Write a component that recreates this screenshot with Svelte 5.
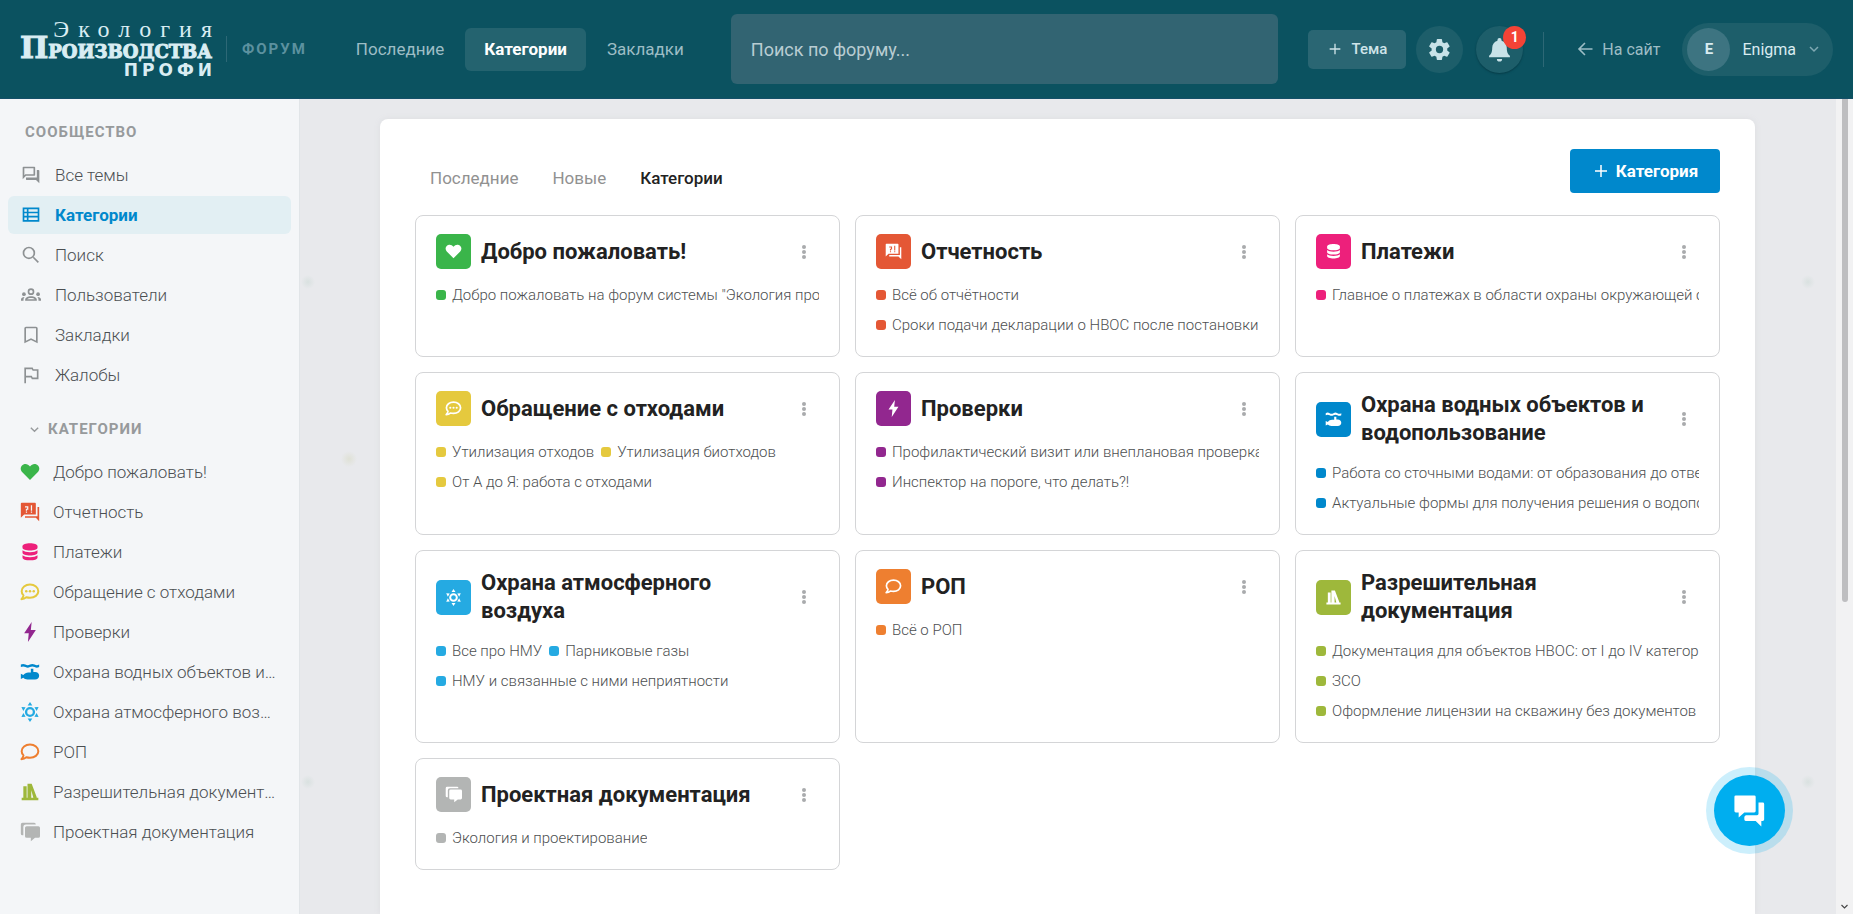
<script lang="ts">
    interface Category {
        name: string;
        icon: string;
        color: string;
        topics: string[];
    }

    const community = [
        { name: "Все темы", icon: "forum" },
        { name: "Категории", icon: "table", active: true },
        { name: "Поиск", icon: "search" },
        { name: "Пользователи", icon: "groups" },
        { name: "Закладки", icon: "bookmark" },
        { name: "Жалобы", icon: "flag" },
    ];

    const categories: Category[] = [
        {
            name: "Добро пожаловать!",
            icon: "heart",
            color: "#3ab54a",
            topics: ['Добро пожаловать на форум системы "Экология производства. Профи"'],
        },
        {
            name: "Отчетность",
            icon: "question",
            color: "#e45735",
            topics: ["Всё об отчётности", "Сроки подачи декларации о НВОС после постановки"],
        },
        {
            name: "Платежи",
            icon: "coins",
            color: "#ed207b",
            topics: ["Главное о платежах в области охраны окружающей среды"],
        },
        {
            name: "Обращение с отходами",
            icon: "commentDots",
            color: "#e5c93e",
            topics: ["Утилизация отходов", "Утилизация биотходов", "От А до Я: работа с отходами"],
        },
        {
            name: "Проверки",
            icon: "bolt",
            color: "#92278f",
            topics: ["Профилактический визит или внеплановая проверка?", "Инспектор на пороге, что делать?!"],
        },
        {
            name: "Охрана водных объектов и водопользование",
            icon: "water",
            color: "#0088cc",
            topics: [
                "Работа со сточными водами: от образования до отведения",
                "Актуальные формы для получения решения о водопользовании",
            ],
        },
        {
            name: "Охрана атмосферного воздуха",
            icon: "sun",
            color: "#25aae2",
            topics: ["Все про НМУ", "Парниковые газы", "НМУ и связанные с ними неприятности"],
        },
        {
            name: "РОП",
            icon: "comment",
            color: "#ee7f30",
            topics: ["Всё о РОП"],
        },
        {
            name: "Разрешительная документация",
            icon: "books",
            color: "#9eb83b",
            topics: [
                "Документация для объектов НВОС: от I до IV категории",
                "ЗСО",
                "Оформление лицензии на скважину без документов",
            ],
        },
        {
            name: "Проектная документация",
            icon: "messages",
            color: "#b3b5b4",
            topics: ["Экология и проектирование"],
        },
    ];

    let query = $state("");
    let open = $state(true);
</script>

{#snippet glyph(name: string)}
    <svg class="glyph" viewBox="0 0 24 24" fill="currentColor" aria-hidden="true">
        {#if name === "forum"}
            <path d="M15 4v7H5.2L4 12.2V4h11m1-2H3a1 1 0 0 0-1 1v14l4-4h10a1 1 0 0 0 1-1V3a1 1 0 0 0-1-1m5 4h-2v9H6v2a1 1 0 0 0 1 1h11l4 4V7a1 1 0 0 0-1-1Z" />
        {:else if name === "table"}
            <path fill-rule="evenodd" d="M2 3h20v17H2ZM4 5v3h3V5ZM9 5v3h11V5ZM4 10v3h3v-3ZM9 10v3h11v-3ZM4 15v3h3v-3ZM9 15v3h11v-3Z" />
        {:else if name === "search"}
            <circle cx="9.5" cy="9.5" r="6.5" fill="none" stroke="currentColor" stroke-width="2" />
            <path d="m14 15.4 1.4-1.4 6.1 6.1-1.4 1.4z" />
        {:else if name === "groups"}
            <path fill-rule="evenodd" d="M12 4a4 4 0 1 0 0 8 4 4 0 0 0 0-8Zm0 2a2 2 0 1 1 0 4 2 2 0 0 1 0-4ZM12 13.500c3.800 0 7 1.700 7 4.300V19H5v-1.200c0-2.600 3.200-4.300 7-4.300Zm0 2c-2 0-3.800.600-4.600 1.500h9.200c-.800-.900-2.600-1.500-4.600-1.500Z" />
            <circle cx="3.500" cy="11" r="2.200" />
            <circle cx="20.500" cy="11" r="2.200" />
            <path d="M0 19v-1.500c0-1.600 1.700-2.900 4.300-3-.9 1-1.300 2-1.300 3.200V19ZM24 19v-1.500c0-1.600-1.700-2.900-4.300-3 .9 1 1.300 2 1.300 3.200V19Z" />
        {:else if name === "bookmark"}
            <path d="M18 2H6a2 2 0 0 0-2 2v18l8-4 8 4V4a2 2 0 0 0-2-2m0 17-6-3-6 3V4h12Z" />
        {:else if name === "flag"}
            <path d="M4 3v19h2v-7h6l1 2h8V5h-6l-1-2Zm2 2h7l1 2h5v8h-5l-1-2H6Z" />
        {:else if name === "heart"}
            <path d="M12 21.500 2.500 12C-.5 8.700.8 3.800 4.700 2.700 7.500 1.900 10.200 3 12 5.300c1.800-2.300 4.500-3.400 7.300-2.600 3.900 1.100 5.200 6 2.200 9.300Z" />
        {:else if name === "question"}
            <path fill-rule="evenodd" d="M2 1h16a1 1 0 0 1 1 1v13H5l-4 4V2a1 1 0 0 1 1-1ZM6 5v1.500h2.500V8H7v2.500h1.500V9.300H10V5Zm1 6.500V13h1.500v-1.500ZM13 4v6.500h1.500V4Zm0 7.500V13h1.500v-1.500Z" />
            <path d="M21 6h2v17l-4-4H6v-2h15Z" />
        {:else if name === "coins"}
            <path d="M3 5c0-2.200 4-3.500 9-3.500S21 2.800 21 5v2c0 2-4 3.300-9 3.300S3 9 3 7Z" />
            <path d="M3 10c1.800 1.600 5 2.400 9 2.400s7.200-.8 9-2.400v3c0 2-4 3.300-9 3.300S3 15 3 13Z" />
            <path d="M3 16c1.800 1.600 5 2.400 9 2.400s7.200-.8 9-2.400v2.500c0 2.200-4 3.500-9 3.500s-9-1.300-9-3.500Z" />
        {:else if name === "comment" || name === "commentDots"}
            <path fill="none" stroke="currentColor" stroke-width="2.400" stroke-linejoin="round" d="M12 3C6.400 3 2 6.500 2 11c0 2 .8 3.600 2.200 5-.3 1.800-1.200 3.300-2.500 4.600 2.300 0 4.300-.8 5.900-2.200 1.400.400 2.800.600 4.400.600 5.600 0 10-3.500 10-8s-4.400-8-10-8Z" />
            {#if name === "commentDots"}
                <circle cx="7.500" cy="11" r="1.500" />
                <circle cx="12" cy="11" r="1.500" />
                <circle cx="16.500" cy="11" r="1.500" />
            {/if}
        {:else if name === "bolt"}
            <path d="M14 0 5 13.500h5.500L9.500 24 19 9.500h-6Z" />
        {:else if name === "water"}
            <path d="M1 3c2-1 3.500-1 5.500 0s3.500 1 5.500 0 3.500-1 5.500 0 3.500 1 5.500 0v3c-2 1-3.500 1-5.500 0s-3.500-1-5.500 0-3.500 1-5.500 0-3.500-1-5.500 0Z" />
            <path d="M13 8h3v4h2c3 0 5 2 5 4.500s-2 4.500-5 4.500H9c-2.200 0-3.800-.700-5-2L1 20.500V14l3 1.500c1.500-2 3.500-3 6-3h3Z" />
        {:else if name === "sun"}
            <circle cx="12" cy="12" r="4.700" fill="none" stroke="currentColor" stroke-width="2.800" />
            <path d="m12 0 2.800 4.300H9.200ZM12 24l2.800-4.300H9.200ZM1.700 6l5 .300-2.700 4.600ZM22.300 6l-5 .300 2.700 4.600ZM1.700 18l5-.300L4 13.100ZM22.300 18l-5-.300 2.700-4.600Z" />
        {:else if name === "books"}
            <path d="M4 5h4v14H4ZM9 2h5l6 16v1h-4L13.500 10v9H9ZM2 19h20v3H2Z" />
        {:else if name === "messages"}
            <path d="M3 1h14a2 2 0 0 1 2 2H7a3 3 0 0 0-3 3v10H3a2 2 0 0 1-2-2V3a2 2 0 0 1 2-2Z" />
            <path d="M8 5h14a2 2 0 0 1 2 2v10a2 2 0 0 1-2 2h-4l-5 4v-4H8a2 2 0 0 1-2-2V7a2 2 0 0 1 2-2Z" />
        {:else if name === "chat"}
            <path d="M2 1h13a1 1 0 0 1 1 1v10a1 1 0 0 1-1 1H8l-4 3.500V13H2a1 1 0 0 1-1-1V2a1 1 0 0 1 1-1Z" />
            <path d="M18 6h3a1 1 0 0 1 1 1v11a1 1 0 0 1-1 1h-1v4l-4-4H9a1 1 0 0 1-1-1v-2l1-1h8a1 1 0 0 0 1-1Z" />
        {:else if name === "plus"}
            <path d="M11 4h2v7h7v2h-7v7h-2v-7H4v-2h7Z" />
        {:else if name === "gear"}
            <path d="M19.400 13a7.500 7.500 0 0 0 0-2l2.100-1.600a.5.5 0 0 0 .1-.700l-2-3.400a.5.5 0 0 0-.6-.200l-2.500 1a7.300 7.300 0 0 0-1.700-1l-.400-2.700a.5.5 0 0 0-.5-.400h-4a.5.5 0 0 0-.5.400L9 5.100a7.300 7.300 0 0 0-1.700 1l-2.500-1a.5.5 0 0 0-.6.200l-2 3.400a.5.5 0 0 0 .1.700L4.500 11a7.500 7.500 0 0 0 0 2l-2.200 1.600a.5.5 0 0 0-.1.700l2 3.400c.1.200.4.300.6.200l2.500-1a7.300 7.300 0 0 0 1.700 1l.400 2.700c0 .2.200.4.500.4h4c.3 0 .5-.2.5-.4l.4-2.700a7.300 7.300 0 0 0 1.700-1l2.500 1c.2.100.5 0 .6-.2l2-3.400a.5.5 0 0 0-.1-.700ZM12 15.500a3.500 3.500 0 1 1 0-7 3.500 3.500 0 0 1 0 7Z" />
        {:else if name === "bell"}
            <path d="M12 1a2 2 0 0 0-2 2v.500C6.800 4.400 5 7 5 10.500 5 15 3.500 17 2 18v1.500h20V18c-1.500-1-3-3-3-7.500 0-3.500-1.800-6.100-5-7V3a2 2 0 0 0-2-2ZM9.500 21a2.500 2.500 0 0 0 5 0Z" />
        {:else if name === "back"}
            <path d="M22 11v2H6.500l6.200 6.200-1.500 1.500L2.500 12l8.700-8.700 1.500 1.500L6.500 11Z" />
        {:else if name === "down"}
            <path fill="none" stroke="currentColor" stroke-width="3" d="m4 8 8 8 8-8" />
        {/if}
    </svg>
{/snippet}

<div class="app">
    <header class="topbar">
        <a href="/" class="logo">
            <span class="logo-top">Экология</span>
            <span class="logo-mid"><b>П</b>РОИЗВОДСТВА</span>
            <span class="logo-bottom">ПРОФИ</span>
        </a>
        <span class="section-name">ФОРУМ</span>

        <nav class="top-nav">
            <a href="/latest">Последние</a>
            <a href="/categories" class="current">Категории</a>
            <a href="/bookmarks">Закладки</a>
        </nav>

        <input
            class="search"
            type="search"
            aria-label="Поиск по форуму"
            placeholder="Поиск по форуму..."
            bind:value={query} />

        <div class="tools">
            <button class="new-topic">{@render glyph("plus")}Тема</button>
            <button class="round" aria-label="Настройки">{@render glyph("gear")}</button>
            <button class="round raised" aria-label="Уведомления">
                {@render glyph("bell")}
                <span class="badge">1</span>
            </button>
            <a href="/site" class="back">{@render glyph("back")}На сайт</a>
            <button class="user">
                <span class="avatar">E</span>
                Enigma
                {@render glyph("down")}
            </button>
        </div>
    </header>

    <div class="body">
        <aside class="sidebar">
            <h2>СООБЩЕСТВО</h2>
            <ul>
                {#each community as item (item.name)}
                    <li>
                        <a href="/" class="side-link" class:active={item.active}>
                            {@render glyph(item.icon)}
                            <span>{item.name}</span>
                        </a>
                    </li>
                {/each}
            </ul>

            <button class="fold" aria-expanded={open} onclick={() => (open = !open)}>
                {@render glyph("down")}КАТЕГОРИИ
            </button>
            {#if open}
                <ul class="side-categories">
                    {#each categories as category (category.name)}
                        <li>
                            <a href="/" class="side-link" style:--color={category.color}>
                                {@render glyph(category.icon)}
                                <span>{category.name}</span>
                            </a>
                        </li>
                    {/each}
                </ul>
            {/if}
        </aside>

        <main>
            <section class="panel">
                <div class="panel-head">
                    <nav class="tabs">
                        <a href="/latest">Последние</a>
                        <a href="/new">Новые</a>
                        <a href="/categories" class="current">Категории</a>
                    </nav>
                    <button class="new-category">{@render glyph("plus")}Категория</button>
                </div>

                <div class="grid">
                    {#each categories as category (category.name)}
                        <article class="card" style:--color={category.color}>
                            <div class="card-head">
                                <span class="card-icon">{@render glyph(category.icon)}</span>
                                <h3>{category.name}</h3>
                                <button class="more" aria-label="Действия">
                                    <i></i><i></i><i></i>
                                </button>
                            </div>
                            <div class="topics">
                                {#each category.topics as topic}
                                    <a href="/">{topic}</a>
                                {/each}
                            </div>
                        </article>
                    {/each}
                </div>
            </section>
        </main>

        <div class="scroll-track">
            <div class="scroll-thumb"></div>
            {@render glyph("down")}
        </div>
    </div>

    <button class="chat" aria-label="Чат">{@render glyph("chat")}</button>
</div>

<style>
    :global(body) {
        margin: 0;
    }

    .app {
        display: flex;
        flex-direction: column;
        height: 100vh;
        overflow: hidden;
        font-family: Roboto, "Open Sans", sans-serif;
        font-size: 17px;
        color: #222;
    }

    .app * {
        box-sizing: border-box;
    }

    a {
        color: inherit;
        text-decoration: none;
    }

    button {
        border: 0;
        padding: 0;
        background: none;
        font: inherit;
        color: inherit;
        cursor: pointer;
    }

    ul {
        list-style: none;
        margin: 0;
        padding: 0;
    }

    .glyph {
        flex: none;
        width: 20px;
        height: 20px;
    }

    .topbar {
        display: flex;
        align-items: center;
        flex: none;
        height: 99px;
        padding: 0 20px;
        background: #0b5260;
        border-bottom: 1px solid #144f68;
        color: #9dbdc5;
    }

    .logo {
        display: flex;
        flex-direction: column;
        align-items: flex-end;
        width: 192px;
        color: #d9edf3;
        white-space: nowrap;
    }

    .logo-top {
        font: 24px/18px "Liberation Serif", serif;
        letter-spacing: 9px;
        margin-right: -9px;
    }

    .logo-mid {
        font: bold 18px/20px "DejaVu Serif", serif;
        -webkit-text-stroke: 1px currentColor;
    }

    .logo-mid b {
        font-size: 30px;
    }

    .logo-bottom {
        font: bold 17px/17px "DejaVu Sans", sans-serif;
        letter-spacing: 4px;
        margin-right: -4px;
    }

    .section-name {
        margin-left: 14px;
        padding-left: 15px;
        border-left: 1px solid #2d6876;
        font-size: 15px;
        line-height: 26px;
        font-weight: 700;
        letter-spacing: 2px;
        color: #5c919f;
    }

    .top-nav {
        display: flex;
        gap: 2px;
        margin-left: 30px;
    }

    .top-nav a {
        padding: 0 19px;
        line-height: 43px;
        border-radius: 6px;
    }

    .top-nav .current {
        background: #24636f;
        color: #fff;
        font-weight: 700;
    }

    .search {
        flex: 1;
        min-width: 0;
        height: 70px;
        margin: 0 30px 0 28px;
        padding: 0 20px;
        border: 0;
        border-radius: 6px;
        background: #326472;
        color: #fff;
        font: 18px Roboto, sans-serif;
    }

    .search::placeholder {
        color: #b9cdd2;
    }

    .tools {
        display: flex;
        align-items: center;
    }

    .new-topic {
        display: flex;
        align-items: center;
        justify-content: center;
        gap: 8px;
        width: 98px;
        height: 39px;
        border-radius: 5px;
        background: #2a6673;
        color: #cfe4e9;
        font-size: 15px;
        font-weight: 500;
    }

    .new-topic .glyph {
        width: 16px;
        height: 16px;
    }

    .round {
        position: relative;
        display: flex;
        align-items: center;
        justify-content: center;
        width: 47px;
        height: 47px;
        margin-left: 10px;
        border-radius: 50%;
        background: #1d5e6a;
        color: #c8e2e8;
    }

    .round .glyph {
        width: 25px;
        height: 25px;
    }

    .raised {
        margin-left: 13px;
        box-shadow: 0 1px 2px #063c48;
    }

    .badge {
        position: absolute;
        top: 0;
        right: -3px;
        width: 23px;
        border-radius: 50%;
        background: #f44336;
        color: #fff;
        font-size: 14px;
        line-height: 23px;
        font-weight: 700;
    }

    .back {
        display: flex;
        align-items: center;
        gap: 8px;
        margin-left: 20px;
        padding-left: 32px;
        border-left: 1px solid #2d6876;
        font-size: 16px;
        line-height: 35px;
        white-space: nowrap;
    }

    .back .glyph {
        width: 18px;
        height: 18px;
    }

    .user {
        display: flex;
        align-items: center;
        gap: 12px;
        height: 53px;
        margin-left: 22px;
        padding: 0 13px 0 5px;
        border-radius: 27px;
        background: #1d5e6a;
        color: #d9ecf1;
        font-size: 16px;
    }

    .user .glyph {
        width: 12px;
        height: 12px;
        color: #7fa9b3;
    }

    .avatar {
        width: 43px;
        border-radius: 50%;
        background: #3d7481;
        font-size: 15px;
        line-height: 43px;
        font-weight: 700;
    }

    .body {
        position: relative;
        display: flex;
        flex: 1;
        min-height: 0;
    }

    .sidebar {
        flex: none;
        width: 300px;
        padding: 18px 8px 0;
        border-right: 1px solid #e1e5e8;
        background: #f4f6f8;
        color: #4b4f52;
        overflow: hidden;
    }

    .sidebar h2,
    .fold {
        margin: 0;
        font-size: 15px;
        line-height: 30px;
        font-weight: 700;
        letter-spacing: 1px;
        color: #979a9c;
    }

    .sidebar h2 {
        padding-left: 17px;
        margin-bottom: 9px;
    }

    .fold {
        display: flex;
        align-items: center;
        gap: 8px;
        padding-left: 21px;
        margin: 20px 0 9px;
    }

    .fold .glyph {
        width: 11px;
        height: 11px;
    }

    .side-link {
        display: flex;
        align-items: center;
        gap: 14px;
        height: 38px;
        margin-bottom: 2px;
        padding: 0 12px 0 13px;
        border-radius: 6px;
        font-weight: 300;
    }

    .side-link .glyph {
        color: var(--color, #8d9193);
    }

    .side-link span {
        overflow: hidden;
        text-overflow: ellipsis;
        white-space: nowrap;
    }

    .side-link.active {
        background: #e2eff3;
        color: #0088cc;
        font-weight: 700;
    }

    .side-link.active .glyph {
        color: #0088cc;
    }

    .side-categories .side-link {
        gap: 13px;
        padding-left: 12px;
    }

    main {
        flex: 1;
        min-width: 0;
        padding: 20px 98px 0 80px;
        background:
            radial-gradient(circle at 8px 183px, #d9e1e0 0, transparent 7px),
            radial-gradient(circle at 49px 360px, #dfe1d6 0, transparent 8px),
            radial-gradient(circle at 8px 683px, #d9e1e0 0, transparent 7px),
            radial-gradient(circle at 1508px 183px, #d9e1e0 0, transparent 7px),
            radial-gradient(circle at 1508px 683px, #d9e1e0 0, transparent 7px),
            #e8e9ec;
    }

    .panel {
        min-height: 100%;
        padding: 30px 35px;
        border-radius: 8px 8px 0 0;
        background: #fff;
        box-shadow: 0 0 6px #dcdde0;
    }

    .panel-head {
        display: flex;
        justify-content: space-between;
        align-items: flex-start;
        margin-bottom: 22px;
    }

    .tabs {
        display: flex;
        gap: 34px;
        padding: 14px 15px 0;
        line-height: 30px;
        color: #919191;
    }

    .tabs .current {
        color: #222;
        font-weight: 500;
    }

    .new-category {
        display: flex;
        align-items: center;
        justify-content: center;
        gap: 6px;
        width: 150px;
        height: 44px;
        border-radius: 4px;
        background: #0088cc;
        color: #fff;
        font-weight: 700;
    }

    .new-category .glyph {
        width: 18px;
        height: 18px;
    }

    .grid {
        display: grid;
        grid-template-columns: repeat(3, minmax(0, 1fr));
        gap: 15px;
    }

    .card {
        padding: 18px 20px 16px;
        border: 1px solid #d4d5d7;
        border-radius: 8px;
    }

    .card-head {
        display: flex;
        align-items: center;
        gap: 10px;
        min-height: 35px;
        margin-bottom: 11px;
    }

    .card-icon {
        display: flex;
        align-items: center;
        justify-content: center;
        flex: none;
        width: 35px;
        height: 35px;
        border-radius: 5px;
        background: var(--color);
        color: #fff;
    }

    .card-icon .glyph {
        width: 17px;
        height: 17px;
    }

    .card h3 {
        flex: 1;
        margin: 0;
        font-size: 22px;
        line-height: 28px;
        font-weight: 700;
    }

    .more {
        display: flex;
        flex-direction: column;
        align-items: center;
        gap: 1px;
        width: 30px;
    }

    .more i {
        width: 4px;
        height: 4px;
        border-radius: 50%;
        background: #a9abad;
    }

    .topics {
        display: flex;
        flex-wrap: wrap;
        column-gap: 7px;
        font-size: 15px;
        line-height: 30px;
        font-weight: 300;
        color: #4d4f51;
    }

    .topics a {
        max-width: 100%;
        overflow: hidden;
        white-space: nowrap;
    }

    .topics a::before {
        content: "";
        display: inline-block;
        width: 10px;
        height: 10px;
        margin-right: 6px;
        border-radius: 3px;
        background: var(--color);
    }

    .scroll-track {
        position: absolute;
        top: 0;
        right: 0;
        bottom: 0;
        display: flex;
        flex-direction: column;
        align-items: center;
        justify-content: space-between;
        width: 17px;
        padding-bottom: 3px;
        background: #f2f2f3;
    }

    .scroll-thumb {
        width: 6px;
        height: 62%;
        border-radius: 0 0 3px 3px;
        background: #bebec0;
    }

    .scroll-track .glyph {
        width: 9px;
        height: 9px;
        color: #444;
    }

    .chat {
        position: fixed;
        right: 68px;
        bottom: 68px;
        display: flex;
        align-items: center;
        justify-content: center;
        width: 71px;
        height: 71px;
        border-radius: 50%;
        background: #00aeef;
        box-shadow: 0 0 0 8px rgba(0, 174, 239, 0.2);
        color: #fff;
    }

    .chat .glyph {
        width: 34px;
        height: 34px;
    }
</style>
